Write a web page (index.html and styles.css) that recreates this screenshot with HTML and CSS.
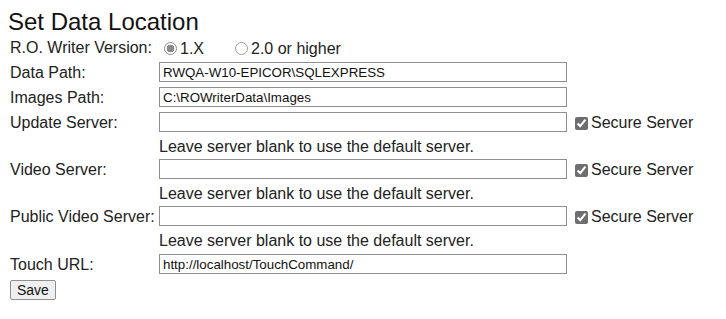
FILE: index.html
```html
<!DOCTYPE html>
<html>
<head>
<meta charset="utf-8">
<link rel="stylesheet" href="styles.css">
</head>
<body>
<h2 class="title">Set Data Location</h2>
<div class="form">
  <div class="label row-version">R.O. Writer Version:</div>
  <div class="radios row-version">
    <label class="radio-opt"><input type="radio" name="ver" checked class="radio">1.X</label>
    <label class="radio-opt second"><input type="radio" name="ver" class="radio">2.0 or higher</label>
  </div>
  <div class="extra row-version"></div>

  <div class="label">Data Path:</div>
  <div class="field"><input class="text" type="text" value="RWQA-W10-EPICOR\SQLEXPRESS"></div>
  <div class="extra"></div>

  <div class="label">Images Path:</div>
  <div class="field"><input class="text" type="text" value="C:\ROWriterData\Images"></div>
  <div class="extra"></div>

  <div class="label">Update Server:</div>
  <div class="field"><input class="text" type="text"></div>
  <div class="extra"><label class="secure"><input type="checkbox" class="check" checked>Secure Server</label></div>

  <div class="hint">Leave server blank to use the default server.</div>

  <div class="label">Video Server:</div>
  <div class="field"><input class="text" type="text"></div>
  <div class="extra"><label class="secure"><input type="checkbox" class="check" checked>Secure Server</label></div>

  <div class="hint">Leave server blank to use the default server.</div>

  <div class="label">Public Video Server:</div>
  <div class="field"><input class="text" type="text"></div>
  <div class="extra"><label class="secure"><input type="checkbox" class="check" checked>Secure Server</label></div>

  <div class="hint">Leave server blank to use the default server.</div>

  <div class="label">Touch URL:</div>
  <div class="field"><input class="text" type="text" value="http://localhost/TouchCommand/"></div>
  <div class="extra"></div>
</div>
<button class="save">Save</button>
</body>
</html>
```
FILE: styles.css
```css
body {
  margin: 8px;
  font-family: "Liberation Sans", Arial, sans-serif;
  color: #222;
  background: #fff;
}
.title {
  margin: 0;
  font-size: 24px;
  font-weight: normal;
  line-height: 27px;
  color: #111;
}
.form {
  display: grid;
  grid-template-columns: 149px 408px auto;
  grid-template-rows: 25px 25px 25px 24px 23px 24px 23px 24px 24px 24px;
  padding-left: 2px;
  font-size: 16px;
}
.label {
  line-height: 24px;
  padding-top: 1px;
  white-space: nowrap;
}
.field {
  padding-top: 2px;
}
.text {
  box-sizing: border-box;
  width: 408px;
  height: 20px;
  margin: 0;
  padding: 1px 2px 1px 3px;
  border: 1px solid #8f8f8f;
  border-radius: 0;
  font-family: "Liberation Sans", Arial, sans-serif;
  font-size: 13.33px;
  color: #111;
  display: block;
}
.radios {
  display: flex;
  align-items: center;
  line-height: 25px;
  padding-top: 1px;
}
.radio-opt {
  display: flex;
  align-items: center;
}
.radio-opt.second {
  margin-left: 26px;
}
.radio {
  appearance: none;
  -webkit-appearance: none;
  box-sizing: border-box;
  width: 13px;
  height: 13px;
  margin: 0 3px 0 5px;
  border: 1px solid #a0a0a0;
  border-radius: 50%;
  background: #fff;
}
.radio:checked {
  border-color: #8a8a8a;
  background: radial-gradient(circle, #8a8a8a 0 3.6px, #fff 4.1px);
}
.extra {
  padding-left: 8px;
}
.secure {
  display: flex;
  align-items: center;
  height: 24px;
  padding-top: 1px;
  white-space: nowrap;
}
.check {
  width: 13px;
  height: 13px;
  margin: 0 3px 0 0;
  accent-color: #6e6e6e;
}
.hint {
  grid-column: 2 / 4;
  line-height: 23px;
  padding-top: 1px;
  white-space: nowrap;
}
.save {
  margin: 4px 0 0 2px;
  font-family: "Liberation Sans", Arial, sans-serif;
  font-size: 14px;
  padding: 1px 6px;
  height: 20px;
  line-height: 16px;
  border: 1px solid #8f8f8f;
  border-radius: 2px;
  background: #efefef;
  color: #111;
}
```
